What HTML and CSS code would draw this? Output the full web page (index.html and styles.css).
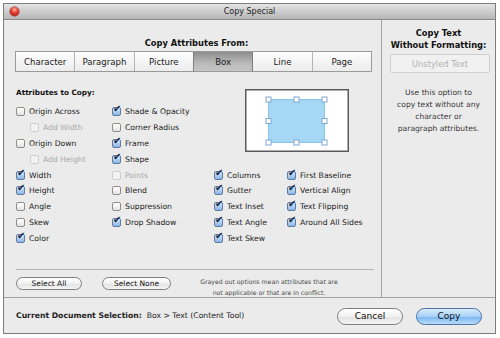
FILE: index.html
```html
<!DOCTYPE html>
<html lang="en">
<head>
    <meta charset="UTF-8">
    <title>Copy Special</title>
    <link rel="stylesheet" href="styles.css">
</head>
<body>

<div class="window">
    <div class="titlebar">
        <span class="close"></span>
        <span class="title">Copy Special</span>
    </div>

    <div class="main">
        <div class="left">
            <h2 class="heading">Copy Attributes From:</h2>
            <div class="segments">
                <div class="seg">Character</div>
                <div class="seg">Paragraph</div>
                <div class="seg">Picture</div>
                <div class="seg active">Box</div>
                <div class="seg">Line</div>
                <div class="seg">Page</div>
            </div>

            <div class="attrs">
                <div class="col col1">
                    <div class="subhead">Attributes to Copy:</div>
                    <label class="item"><span class="cb"></span>Origin Across</label>
                    <label class="item sub off"><span class="cb"></span>Add Width</label>
                    <label class="item"><span class="cb"></span>Origin Down</label>
                    <label class="item sub off"><span class="cb"></span>Add Height</label>
                    <label class="item"><span class="cb on"></span>Width</label>
                    <label class="item"><span class="cb on"></span>Height</label>
                    <label class="item"><span class="cb"></span>Angle</label>
                    <label class="item"><span class="cb"></span>Skew</label>
                    <label class="item"><span class="cb on"></span>Color</label>
                </div>
                <div class="col col2">
                    <label class="item"><span class="cb on"></span>Shade &amp; Opacity</label>
                    <label class="item"><span class="cb"></span>Corner Radius</label>
                    <label class="item"><span class="cb on"></span>Frame</label>
                    <label class="item"><span class="cb on"></span>Shape</label>
                    <label class="item off"><span class="cb"></span>Points</label>
                    <label class="item"><span class="cb"></span>Blend</label>
                    <label class="item"><span class="cb"></span>Suppression</label>
                    <label class="item"><span class="cb on"></span>Drop Shadow</label>
                </div>
                <div class="col34">
                    <div class="preview">
                        <svg width="104" height="63" viewBox="0 0 104 63">
                            <rect x="0.75" y="0.75" width="102.5" height="61.5" fill="#fff" stroke="#5a5a5a" stroke-width="1.5"/>
                            <rect x="23.5" y="10.5" width="56" height="43" fill="#a6d8f6" stroke="#8cc3ea"/>
                            <g fill="#fff" stroke="#7fa6d6">
                                <rect x="21" y="8" width="5" height="5"/>
                                <rect x="49" y="8" width="5" height="5"/>
                                <rect x="77" y="8" width="5" height="5"/>
                                <rect x="21" y="29.5" width="5" height="5"/>
                                <rect x="77" y="29.5" width="5" height="5"/>
                                <rect x="21" y="51" width="5" height="5"/>
                                <rect x="49" y="51" width="5" height="5"/>
                                <rect x="77" y="51" width="5" height="5"/>
                            </g>
                        </svg>
                    </div>
                    <div class="textcols">
                        <div class="col col3">
                            <label class="item"><span class="cb on"></span>Columns</label>
                            <label class="item"><span class="cb on"></span>Gutter</label>
                            <label class="item"><span class="cb on"></span>Text Inset</label>
                            <label class="item"><span class="cb on"></span>Text Angle</label>
                            <label class="item"><span class="cb on"></span>Text Skew</label>
                        </div>
                        <div class="col col4">
                            <label class="item"><span class="cb on"></span>First Baseline</label>
                            <label class="item"><span class="cb on"></span>Vertical Align</label>
                            <label class="item"><span class="cb on"></span>Text Flipping</label>
                            <label class="item"><span class="cb on"></span>Around All Sides</label>
                        </div>
                    </div>
                </div>
            </div>

            <div class="select-row">
                <button class="pill small">Select All</button>
                <button class="pill small">Select None</button>
                <p class="note">Grayed out options mean attributes that are<br>not applicable or that are in conflict.</p>
            </div>
        </div>

        <div class="right">
            <h2 class="heading">Copy Text<br>Without Formatting:</h2>
            <button class="unstyled" disabled>Unstyled Text</button>
            <p class="help">Use this option to<br>copy text without any<br>character or<br>paragraph attributes.</p>
        </div>
    </div>

    <div class="footer">
        <div class="selection"><b>Current Document Selection:</b>&nbsp; Box &gt; Text (Content Tool)</div>
        <button class="pill">Cancel</button>
        <button class="pill default">Copy</button>
    </div>
</div>

</body>
</html>
```

FILE: styles.css
```css
body {
    margin: 0;
    background-color: #fff;
    font-family: "DejaVu Sans", sans-serif;
    color: #1e1e1e;
}

.window {
    margin: 3px 0 0 3px;
    width: 491px;
    height: 329px;
    border: 1px solid #7d7d7d;
    background-color: #ebebeb;
    display: flex;
    flex-direction: column;
}

.titlebar {
    height: 15px;
    border-bottom: 1px solid #8a8a8a;
    background: linear-gradient(#e4e4e4, #b6b6b6);
    display: flex;
    align-items: center;
    justify-content: center;
    position: relative;
}

.close {
    position: absolute;
    left: 6px;
    top: 3px;
    width: 9px;
    height: 9px;
    border-radius: 50%;
    background: radial-gradient(circle at 50% 30%, #ffb0a8 0, #e8372c 45%, #9c0f0c 100%);
    box-shadow: 0 0 0 0.5px #7a1a14;
}

.title {
    font-size: 8px;
    color: #222;
}

.main {
    height: 277px;
    display: flex;
    border-bottom: 1px solid #a2a2a2;
}

.heading {
    margin: 0;
    font-size: 8.3px;
    line-height: 12px;
    font-weight: bold;
    text-align: center;
    color: #111;
}

/* left side */

.left {
    width: 361px;
    padding: 17px 4px 0 12px;
    display: flex;
    flex-direction: column;
}

.segments {
    display: flex;
    margin: 2px 5px 0 -1px;
    height: 19px;
    border: 1px solid #9a9a9a;
    background: linear-gradient(#fdfdfd, #ececec);
}

.seg {
    flex: 1;
    display: flex;
    align-items: center;
    justify-content: center;
    font-size: 8.6px;
    color: #222;
    border-left: 1px solid #b4b4b4;
}

.seg:first-child {
    border-left: none;
}

.seg.active {
    background: linear-gradient(#8e8e8e, #b9b9b9 60%, #c6c6c6);
    border-left-color: #7c7c7c;
}

.seg.active + .seg {
    border-left-color: #7c7c7c;
}

.attrs {
    display: flex;
    margin-top: 15px;
}

.col {
    display: flex;
    flex-direction: column;
}

.col1 {
    width: 96px;
}

.col2 {
    width: 102px;
    padding-top: 17px;
}

.col3 {
    width: 73px;
}

.subhead {
    height: 17px;
    font-size: 7.3px;
    line-height: 12px;
    font-weight: bold;
    color: #111;
}

.item {
    height: 15.8px;
    display: flex;
    align-items: center;
    font-size: 7.7px;
    color: #222;
    white-space: nowrap;
}

.item.sub {
    padding-left: 14px;
}

.item.off {
    color: #a9a9a9;
}

.cb {
    width: 9px;
    height: 9px;
    box-sizing: border-box;
    margin-right: 4px;
    border: 1px solid #8d8d8d;
    border-radius: 2px;
    background: linear-gradient(#fff, #e4e4e4);
    position: relative;
    flex: none;
}

.item.off .cb {
    border-color: #cdcdcd;
    background: #f2f2f2;
}

.cb.on {
    border-color: #5d7ba3;
    background: linear-gradient(#d4e6f8, #8db6e4);
}

.cb.on::after {
    content: "\2714";
    position: absolute;
    left: 0;
    top: -5px;
    font-size: 10px;
    line-height: 12px;
    color: #122445;
}

.col34 {
    display: flex;
    flex-direction: column;
}

.preview {
    margin: 2px 0 0 31px;
    height: 63px;
}

.preview svg {
    display: block;
}

.textcols {
    display: flex;
    margin-top: 15.2px;
}

.select-row {
    margin-top: auto;
    border-top: 1px solid #b4b4b4;
    margin-right: 3px;
    padding-top: 6px;
    height: 21px;
    display: flex;
    align-items: flex-start;
}

.pill {
    font-family: "DejaVu Sans", sans-serif;
    font-size: 9px;
    color: #111;
    height: 17px;
    padding: 0;
    border: 1px solid #7e7e7e;
    border-radius: 9px;
    background: linear-gradient(#ffffff, #f1f1f1 50%, #e2e2e2 51%, #f4f4f4);
    cursor: pointer;
}

.pill.small {
    font-size: 7.5px;
    height: 13px;
    margin-top: 1px;
    border-radius: 7px;
    width: 66px;
}

.pill.small + .pill.small {
    margin-left: 20px;
    width: 69px;
}

.note {
    margin: 0 0 0 24px;
    width: 148px;
    font-size: 6.2px;
    line-height: 11px;
    text-align: center;
    color: #4a4a4a;
}

/* right side */

.right {
    flex: 1;
    border-left: 1px solid #a2a2a2;
    padding-top: 7px;
    display: flex;
    flex-direction: column;
}

.unstyled {
    margin: 3px 5px 0 8px;
    height: 19px;
    font-family: "DejaVu Sans", sans-serif;
    font-size: 8.3px;
    color: #b2b2b2;
    background-color: #f1f1f1;
    border: 1px solid #cfcfcf;
    border-radius: 2px;
}

.help {
    margin: 14px 0 0;
    font-size: 7.6px;
    line-height: 12px;
    text-align: center;
    color: #3a3a3a;
}

/* footer */

.footer {
    flex: 1;
    display: flex;
    align-items: center;
    padding: 0 13px 0 12px;
}

.selection {
    flex: 1;
    font-size: 7.7px;
    color: #222;
}

.footer .pill {
    width: 66px;
    margin-top: 1px;
}

.footer .pill + .pill {
    margin-left: 13px;
}

.pill.default {
    border-color: #4f73a6;
    background: linear-gradient(#d8ecfd, #a7d0f7 50%, #79b5f0 51%, #b6dcfb);
}
```
